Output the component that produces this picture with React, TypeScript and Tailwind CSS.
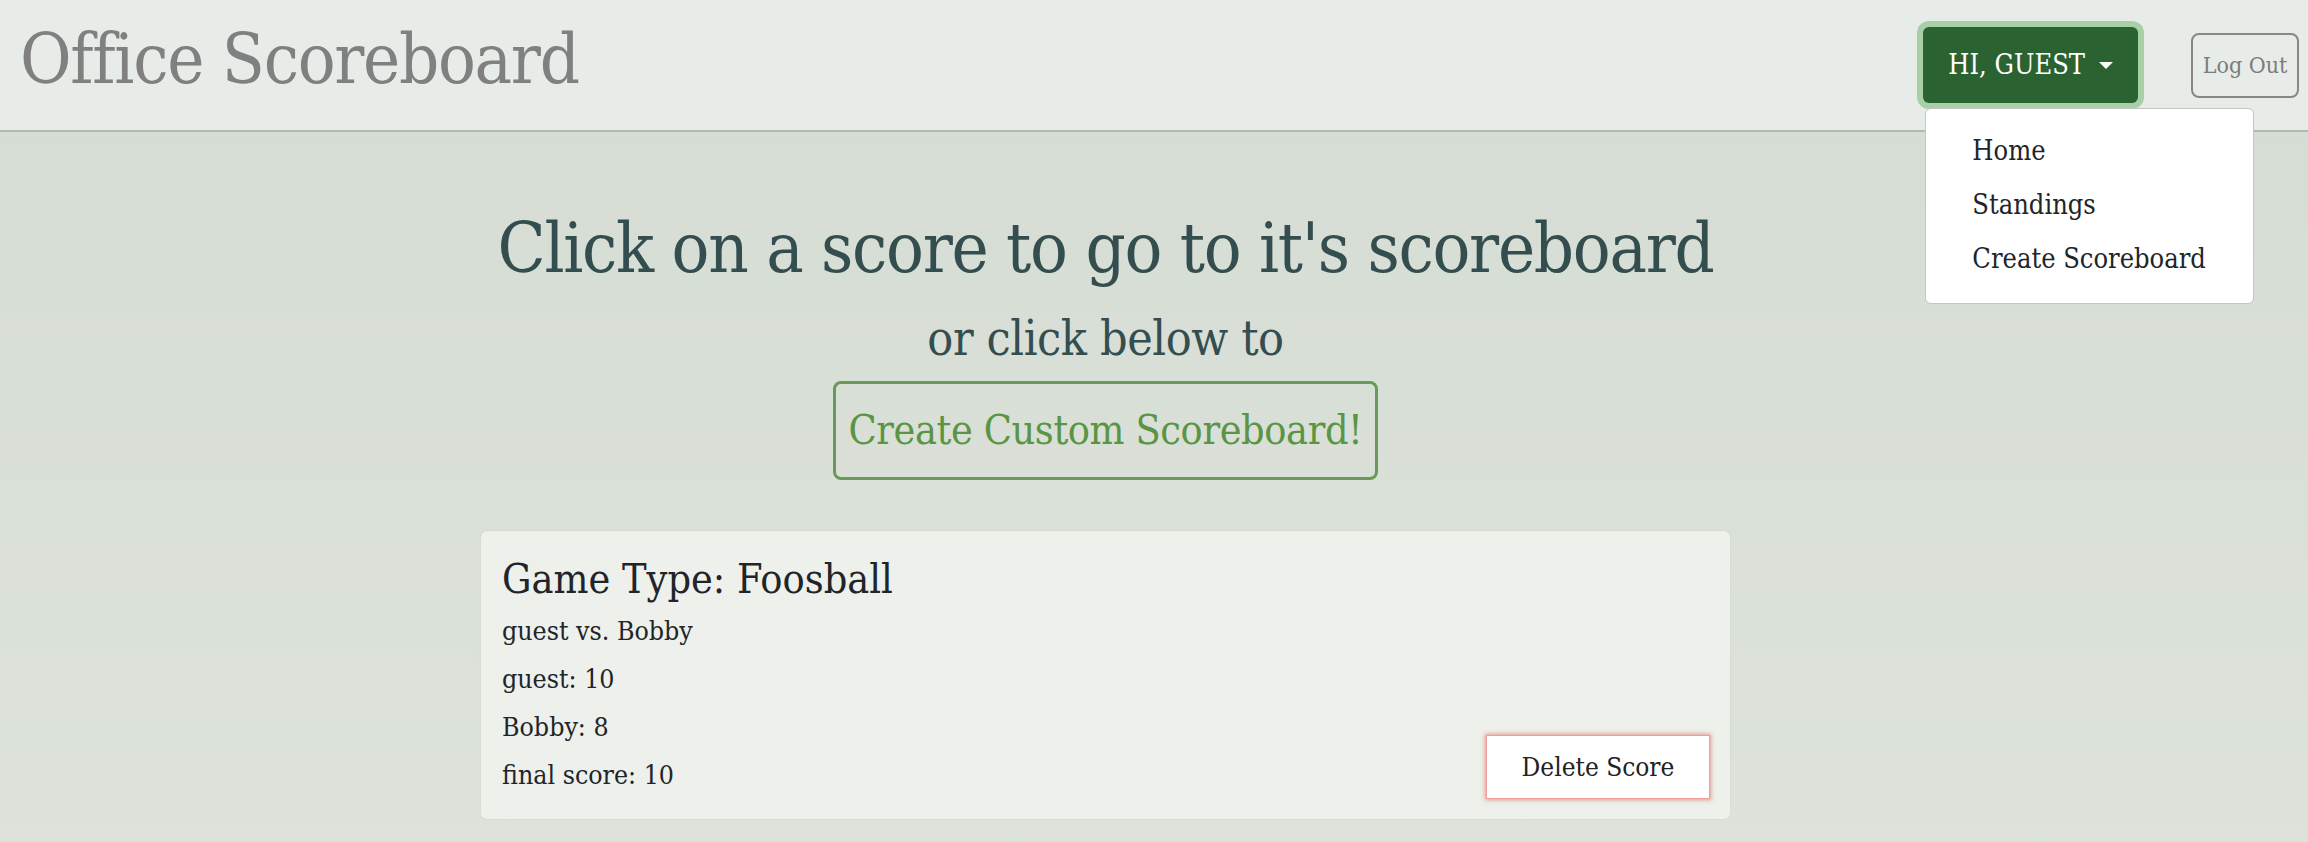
import { useState } from "react";

interface Score {
  id: string;
  gameType: string;
  playerOne: string;
  playerTwo: string;
  scoreOne: number;
  scoreTwo: number;
  finalScore: number;
}

const scores: Score[] = [
  {
    id: "1",
    gameType: "Foosball",
    playerOne: "guest",
    playerTwo: "Bobby",
    scoreOne: 10,
    scoreTwo: 8,
    finalScore: 10,
  },
];

export default function App() {
  const [menuOpen] = useState(true);

  return (
    <div className="min-h-screen bg-gradient-to-b from-[#d5dcd3] to-[#dde3db] font-['DejaVu_Serif_Condensed','DejaVu_Serif',serif] font-stretch-condensed">
      {/* Navbar */}
      <header className="h-[132px] flex items-center justify-between bg-[#e8ece8] border-b-2 border-[#b3b8b3] pl-[20px] pr-[9px]">
        <h1 className="text-[70px] leading-none tracking-[-1.3px] text-[#808080] pb-[12px]">Office Scoreboard</h1>

        <div className="flex items-center gap-[53px]">
          <div className="relative">
            <button className="h-[76px] px-[25px] flex items-center bg-[#2b6231] text-white text-[27px] rounded-[6px] ring-[6px] ring-[#a7d0a7]">
              HI, GUEST
              <span className="ml-[14px] w-0 h-0 border-t-[7px] border-t-white border-x-[7px] border-x-transparent" />
            </button>

            {menuOpen && (
              <div className="absolute left-[2px] top-[81px] w-[329px] bg-white border border-[#c3c6c3] rounded-[6px] pt-[15px] pb-[17px] z-10">
                {["Home", "Standings", "Create Scoreboard"].map(item => (
                  <div key={item} className="h-[54px] leading-[54px] pl-[46px] text-[27px] text-[#212529]">
                    {item}
                  </div>
                ))}
              </div>
            )}
          </div>

          <button className="w-[108px] h-[65px] border-2 border-[#878787] rounded-[8px] text-[23px] text-[#7c7c7c]">
            Log Out
          </button>
        </div>
      </header>

      {/* Main */}
      <main className="flex flex-col items-center pr-[97px] pb-[40px]">
        <h2 className="mt-[76px] text-[70px] leading-[80px] tracking-[-1.3px] text-[#344e50]">
          Click on a score to go to it's scoreboard
        </h2>
        <h3 className="mt-[22px] text-[48px] leading-[56px] tracking-[-0.4px] text-[#344e50]">or click below to</h3>
        <button className="mt-[15px] h-[99px] px-[12px] border-[3px] border-[#6a9a5a] rounded-[8px] text-[41px] tracking-[-0.4px] text-[#5a9545]">
          Create Custom Scoreboard!
        </button>

        <div className="mt-[51px] w-[1249px] space-y-4">
          {scores.map(score => (
            <div
              key={score.id}
              className="flex items-end justify-between bg-[#edf0eb] rounded-[6px] shadow-[0_0_2px_rgba(0,0,0,0.08)] pl-[21px] pr-[20px] pt-[24px] pb-[20px]"
            >
              <div className="text-[#212529]">
                <h4 className="text-[41px] leading-[48px] mb-[4px]">Game Type: {score.gameType}</h4>
                <div className="text-[26.5px] leading-[48px]">
                  <p>
                    {score.playerOne} vs. {score.playerTwo}
                  </p>
                  <p>
                    {score.playerOne}: {score.scoreOne}
                  </p>
                  <p>
                    {score.playerTwo}: {score.scoreTwo}
                  </p>
                  <p>final score: {score.finalScore}</p>
                </div>
              </div>

              <button className="w-[224px] h-[64px] bg-white border border-[#ee9f97] shadow-[0_0_4px_1px_rgba(225,90,80,0.6)] text-[26px] text-[#222]">
                Delete Score
              </button>
            </div>
          ))}
        </div>
      </main>
    </div>
  );
}
